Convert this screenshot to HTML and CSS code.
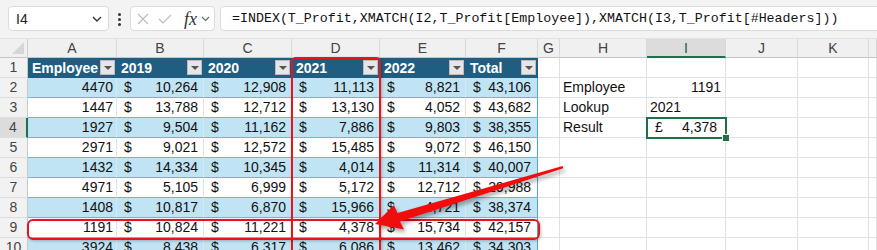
FILE: index.html
```html
<!DOCTYPE html>
<html lang="en">
<head>
<meta charset="utf-8">
<title>Sheet</title>
<link rel="stylesheet" href="styles.css">
</head>
<body>
<div class="page">
  <div class="toolbar">
    <div class="namebox"><span>I4</span>
      <svg class="chev" width="10" height="6" viewBox="0 0 10 6"><path d="M1 1 L5 5 L9 1" fill="none" stroke="#333" stroke-width="1.4"/></svg>
    </div>
    <div class="dots"><i></i><i></i><i></i></div>
    <div class="fxbox">
      <svg width="12" height="12" viewBox="0 0 12 12"><path d="M1 1 L11 11 M11 1 L1 11" stroke="#BDBDBD" stroke-width="1.2" fill="none"/></svg>
      <svg class="check" width="14" height="10" viewBox="0 0 14 10"><path d="M1 5 L5 9 L13 1" stroke="#BDBDBD" stroke-width="1.2" fill="none"/></svg>
      <span class="fx">fx</span>
      <svg class="fxchev" width="9" height="6" viewBox="0 0 9 6"><path d="M1 1 L4.5 4.5 L8 1" fill="none" stroke="#666" stroke-width="1.1"/></svg>
    </div>
    <div class="formula">=INDEX(T_Profit,XMATCH(I2,T_Profit[Employee]),XMATCH(I3,T_Profit[#Headers]))</div>
  </div>

  <div class="sheet">
    <!-- column headers -->
    <div class="corner"></div>
    <div class="ch">A</div><div class="ch">B</div><div class="ch">C</div><div class="ch">D</div><div class="ch">E</div><div class="ch">F</div><div class="ch">G</div><div class="ch">H</div><div class="ch sel">I</div><div class="ch">J</div><div class="ch">K</div><div class="ch"></div>

    <!-- row 1 -->
    <div class="rh">1</div>
    <div class="th"><span>Employee</span><i class="fb"></i></div>
    <div class="th"><span>2019</span><i class="fb"></i></div>
    <div class="th"><span>2020</span><i class="fb"></i></div>
    <div class="th"><span>2021</span><i class="fb"></i></div>
    <div class="th"><span>2022</span><i class="fb"></i></div>
    <div class="th"><span>Total</span><i class="fb"></i></div>
    <div class="c"></div><div class="c"></div><div class="c"></div><div class="c"></div><div class="c"></div><div class="c"></div>

    <!-- row 2 -->
    <div class="rh">2</div>
    <div class="td b n">4470</div>
    <div class="td b cur"><span>$</span><span>10,264</span></div>
    <div class="td b cur"><span>$</span><span>12,908</span></div>
    <div class="td b cur"><span>$</span><span>11,113</span></div>
    <div class="td b cur"><span>$</span><span>8,821</span></div>
    <div class="td b cur tot last"><span>$</span><span>43,106</span></div>
    <div class="c"></div><div class="c txt">Employee</div><div class="c n">1191</div><div class="c"></div><div class="c"></div><div class="c"></div>

    <!-- row 3 -->
    <div class="rh">3</div>
    <div class="td n">1447</div>
    <div class="td cur"><span>$</span><span>13,788</span></div>
    <div class="td cur"><span>$</span><span>12,712</span></div>
    <div class="td cur"><span>$</span><span>13,130</span></div>
    <div class="td cur"><span>$</span><span>4,052</span></div>
    <div class="td cur tot last"><span>$</span><span>43,682</span></div>
    <div class="c"></div><div class="c txt">Lookup</div><div class="c txt">2021</div><div class="c"></div><div class="c"></div><div class="c"></div>

    <!-- row 4 -->
    <div class="rh sel">4</div>
    <div class="td b n">1927</div>
    <div class="td b cur"><span>$</span><span>9,504</span></div>
    <div class="td b cur"><span>$</span><span>11,162</span></div>
    <div class="td b cur"><span>$</span><span>7,886</span></div>
    <div class="td b cur"><span>$</span><span>9,803</span></div>
    <div class="td b cur tot last"><span>$</span><span>38,355</span></div>
    <div class="c"></div><div class="c txt">Result</div><div class="c cur gbp"><span>£</span><span>4,378</span></div><div class="c"></div><div class="c"></div><div class="c"></div>

    <!-- row 5 -->
    <div class="rh">5</div>
    <div class="td n">2971</div>
    <div class="td cur"><span>$</span><span>9,021</span></div>
    <div class="td cur"><span>$</span><span>12,572</span></div>
    <div class="td cur"><span>$</span><span>15,485</span></div>
    <div class="td cur"><span>$</span><span>9,072</span></div>
    <div class="td cur tot last"><span>$</span><span>46,150</span></div>
    <div class="c"></div><div class="c"></div><div class="c"></div><div class="c"></div><div class="c"></div><div class="c"></div>

    <!-- row 6 -->
    <div class="rh">6</div>
    <div class="td b n">1432</div>
    <div class="td b cur"><span>$</span><span>14,334</span></div>
    <div class="td b cur"><span>$</span><span>10,345</span></div>
    <div class="td b cur"><span>$</span><span>4,014</span></div>
    <div class="td b cur"><span>$</span><span>11,314</span></div>
    <div class="td b cur tot last"><span>$</span><span>40,007</span></div>
    <div class="c"></div><div class="c"></div><div class="c"></div><div class="c"></div><div class="c"></div><div class="c"></div>

    <!-- row 7 -->
    <div class="rh">7</div>
    <div class="td n">4971</div>
    <div class="td cur"><span>$</span><span>5,105</span></div>
    <div class="td cur"><span>$</span><span>6,999</span></div>
    <div class="td cur"><span>$</span><span>5,172</span></div>
    <div class="td cur"><span>$</span><span>12,712</span></div>
    <div class="td cur tot last"><span>$</span><span>29,988</span></div>
    <div class="c"></div><div class="c"></div><div class="c"></div><div class="c"></div><div class="c"></div><div class="c"></div>

    <!-- row 8 -->
    <div class="rh">8</div>
    <div class="td b n">1408</div>
    <div class="td b cur"><span>$</span><span>10,817</span></div>
    <div class="td b cur"><span>$</span><span>6,870</span></div>
    <div class="td b cur"><span>$</span><span>15,966</span></div>
    <div class="td b cur"><span>$</span><span>4,721</span></div>
    <div class="td b cur tot last"><span>$</span><span>38,374</span></div>
    <div class="c"></div><div class="c"></div><div class="c"></div><div class="c"></div><div class="c"></div><div class="c"></div>

    <!-- row 9 -->
    <div class="rh">9</div>
    <div class="td n">1191</div>
    <div class="td cur"><span>$</span><span>10,824</span></div>
    <div class="td cur"><span>$</span><span>11,221</span></div>
    <div class="td cur"><span>$</span><span>4,378</span></div>
    <div class="td cur"><span>$</span><span>15,734</span></div>
    <div class="td cur tot last"><span>$</span><span>42,157</span></div>
    <div class="c"></div><div class="c"></div><div class="c"></div><div class="c"></div><div class="c"></div><div class="c"></div>

    <!-- row 10 -->
    <div class="rh">10</div>
    <div class="td b n">3924</div>
    <div class="td b cur"><span>$</span><span>8,438</span></div>
    <div class="td b cur"><span>$</span><span>6,317</span></div>
    <div class="td b cur"><span>$</span><span>6,086</span></div>
    <div class="td b cur"><span>$</span><span>13,462</span></div>
    <div class="td b cur tot last"><span>$</span><span>34,303</span></div>
    <div class="c"></div><div class="c"></div><div class="c"></div><div class="c"></div><div class="c"></div><div class="c"></div>
  </div>

  <!-- overlays -->
  <div class="selection"><i class="handle"></i></div>
  <div class="mark mark-col"></div>
  <div class="mark mark-row"></div>
  <svg class="arrow" width="877" height="250" viewBox="0 0 877 250">
    <defs>
      <filter id="sh" x="-10%" y="-30%" width="130%" height="180%">
        <feDropShadow dx="2" dy="3" stdDeviation="2" flood-color="#000" flood-opacity="0.35"/>
      </filter>
    </defs>
    <polygon filter="url(#sh)" fill="#F00F0F" points="375,224 394,205 397.5,213 562.6,165.9 563.4,168.3 400,221.5 404,229.5"/>
  </svg>
</div>
</body>
</html>
```

FILE: styles.css
```css
body {
  margin: 0;
  background: #fff;
  font-family: "Liberation Sans", Arial, sans-serif;
  font-size: 14px;
  color: #111;
}

.page {
  position: relative;
  width: 877px;
  height: 250px;
  overflow: hidden;
}

/* ---------- toolbar ---------- */
.toolbar {
  height: 39px;
  box-sizing: border-box;
  background: #F3F3F3;
  border-bottom: 1px solid #E6E1DF;
  display: flex;
  align-items: flex-start;
  padding: 6px 0 0 8px;
}

.namebox {
  width: 101px;
  height: 25px;
  box-sizing: border-box;
  background: #fff;
  border: 1px solid #DCDCDC;
  border-radius: 4px;
  display: flex;
  align-items: center;
  justify-content: space-between;
  padding: 0 6px 0 7px;
  color: #222;
}

.dots {
  display: flex;
  flex-direction: column;
  gap: 2px;
  margin: 7px 9px 0 9px;
}

.dots i {
  display: block;
  width: 3px;
  height: 3px;
  border-radius: 50%;
  background: #333;
}

.fxbox {
  width: 85px;
  height: 25px;
  box-sizing: border-box;
  background: #fff;
  border: 1px solid #DCDCDC;
  border-radius: 4px;
  display: flex;
  align-items: center;
  padding-left: 6px;
}

.fxbox .check {
  margin-left: 9px;
}

.fx {
  font-family: "Liberation Serif", "Times New Roman", serif;
  font-style: italic;
  font-size: 18px;
  color: #333;
  margin-left: 12px;
  line-height: 1;
}

.fxchev {
  margin-left: 4px;
  margin-top: 1px;
}

.formula {
  margin-left: 5px;
  flex: 1;
  margin-right: -10px;
  height: 25px;
  box-sizing: border-box;
  background: #fff;
  border: 1px solid #DCDCDC;
  border-radius: 4px;
  padding-left: 11px;
  font-family: "Liberation Mono", "Courier New", monospace;
  font-size: 13.3px;
  line-height: 23px;
  color: #111;
  white-space: nowrap;
}

/* ---------- sheet grid ---------- */
.sheet {
  display: grid;
  grid-template-columns: 28px 89px 87px 88px 88px 86px 72px 22px 87px 79px 72px 71px 1fr;
  grid-template-rows: 19px repeat(10, 20px);
}

.sheet > div {
  box-sizing: border-box;
  min-width: 0;
  white-space: nowrap;
  overflow: hidden;
}

.corner {
  position: relative;
  background: #F0F0F0;
  border-right: 1px solid #CFCFCF;
  border-bottom: 1px solid #C6C6C6;
}

.corner::after {
  content: "";
  position: absolute;
  right: 3px;
  bottom: 3px;
  width: 12px;
  height: 12px;
  background: #D6D6D6;
  clip-path: polygon(100% 0, 100% 100%, 0 100%);
}

.ch {
  background: #F0F0F0;
  border-right: 1px solid #D8D8D8;
  border-bottom: 1px solid #C6C6C6;
  color: #444;
  text-align: center;
  line-height: 18px;
}

.ch.sel {
  background: #DCDCDC;
  border-bottom: 2px solid #1E7145;
  color: #1D5E3A;
}

.rh {
  background: #F2F2F2;
  border-right: 1px solid #C9C9C9;
  border-bottom: 1px solid #DDDDDD;
  color: #444;
  text-align: center;
  line-height: 19px;
}

.rh.sel {
  background: #DCDCDC;
  border-right: 2px solid #1E7145;
}

.c {
  border-right: 1px solid #E1E1E1;
  border-bottom: 1px solid #E1E1E1;
  line-height: 19px;
}

.txt {
  padding-left: 3px;
}

.n {
  text-align: right;
  padding-right: 4px;
}

/* table */
.th {
  background: #1F5E80;
  color: #fff;
  font-weight: bold;
  display: flex;
  align-items: center;
  justify-content: space-between;
  padding: 0 2px 0 4px;
  border-bottom: 1px solid #1F5E80;
}

.fb {
  display: block;
  position: relative;
  width: 15px;
  height: 15px;
  background: #E6E6E6;
  border: 1px solid #BDBDBD;
  box-sizing: border-box;
}

.fb::after {
  content: "";
  position: absolute;
  left: 3px;
  top: 5px;
  border-left: 4px solid transparent;
  border-right: 4px solid transparent;
  border-top: 4px solid #555;
}

.td {
  background: #fff;
  border-right: 1px solid #E3E3E3;
  border-bottom: 1px solid #6DB5E0;
  line-height: 19px;
}

.td.b {
  background: #C1E4F5;
  border-right-color: #D6E8F1;
}

.td.n {
  padding-right: 3px;
}

.cur {
  display: flex;
  justify-content: space-between;
  padding: 0 5px 0 7px;
}

.tot {
  padding: 0 6px 0 7px;
}

.td.last {
  border-right: 1px solid #4FA5D8;
}

.gbp {
  padding: 0 8px 0 8px;
}

/* ---------- overlays ---------- */
.selection {
  position: absolute;
  left: 646px;
  top: 117px;
  width: 81px;
  height: 22px;
  box-sizing: border-box;
  border: 2px solid #1E7145;
}

.handle {
  position: absolute;
  right: -5px;
  bottom: -5px;
  width: 6px;
  height: 6px;
  background: #1E7145;
  border: 1px solid #fff;
}

.mark {
  position: absolute;
  box-sizing: border-box;
  border: 2px solid #E8141B;
  box-shadow: 1px 1px 3px rgba(0, 0, 0, 0.25);
}

.mark-col {
  left: 291px;
  top: 57px;
  width: 90px;
  height: 220px;
  border-radius: 5px 5px 0 0;
}

.mark-row {
  left: 27px;
  top: 219px;
  width: 513px;
  height: 21px;
  border-radius: 6px;
}

.arrow {
  position: absolute;
  left: 0;
  top: 0;
  pointer-events: none;
}
```
